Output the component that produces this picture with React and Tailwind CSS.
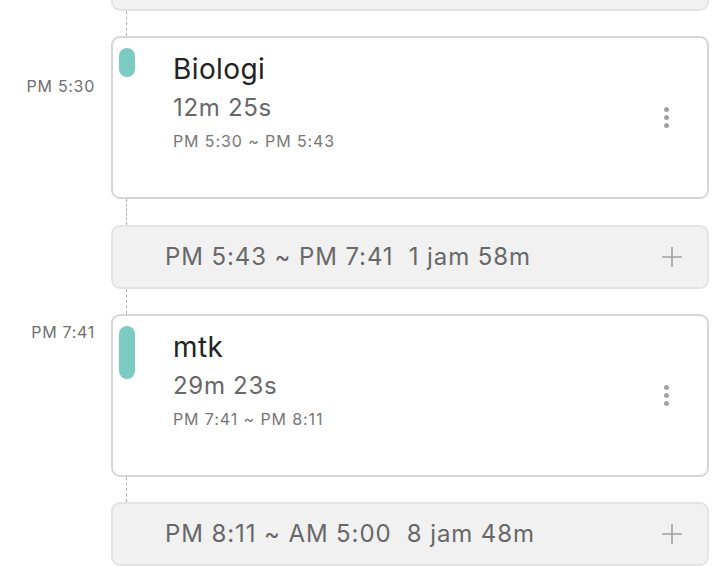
import React from 'react';

const sessions = [
  {
    label: 'PM 5:30',
    labelPad: 'pt-[40px]',
    title: 'Biologi',
    duration: '12m 25s',
    range: 'PM 5:30 ~ PM 5:43',
    pill: 'h-[29px]',
    gap: 'PM 5:43 ~ PM 7:41  1 jam 58m',
  },
  {
    label: 'PM 7:41',
    labelPad: 'pt-[8px]',
    title: 'mtk',
    duration: '29m 23s',
    range: 'PM 7:41 ~ PM 8:11',
    pill: 'h-[53px]',
    gap: 'PM 8:11 ~ AM 5:00  8 jam 48m',
  },
];

const Connector = ({ h }) => (
  <div className={`flex ${h}`}>
    <div className="w-[126px] shrink-0" />
    <div className="h-full border-l border-dashed border-[#b0b0b0]" />
  </div>
);

const Dots = () => (
  <div className="flex flex-col gap-[3px]">
    <span className="w-[5px] h-[5px] rounded-full bg-[#a3a3a3]" />
    <span className="w-[5px] h-[5px] rounded-full bg-[#a3a3a3]" />
    <span className="w-[5px] h-[5px] rounded-full bg-[#a3a3a3]" />
  </div>
);

const Plus = () => (
  <svg width="22" height="22" viewBox="0 0 22 22" fill="none" stroke="#a0a0a0" strokeWidth="1.6">
    <path d="M11 1v20M1 11h20" />
  </svg>
);

const SessionCard = ({ s }) => (
  <div className="flex">
    <div className={`w-[111px] shrink-0 pr-[16px] text-right text-[16px] leading-[20px] text-[#6f6f6f] tracking-[0.7px] ${s.labelPad}`}>
      {s.label}
    </div>
    <div className="flex-1 h-[163px] bg-white border-2 border-[#d6d6d6] rounded-[9px] flex">
      <div className="w-[60px] shrink-0 pl-[6px] pt-[10px]">
        <div className={`w-[16px] rounded-full bg-[#7ccbc3] ${s.pill}`} />
      </div>
      <div className="flex-1 pt-[14px]">
        <div className="text-[28px] leading-[35px] text-[#222] tracking-[0.4px]">{s.title}</div>
        <div className="mt-[6px] text-[24px] leading-[30px] text-[#676767] tracking-[0.7px]">{s.duration}</div>
        <div className="mt-[8px] text-[16px] leading-[20px] text-[#777] tracking-[0.9px]">{s.range}</div>
      </div>
      <div className="flex items-center pr-[38px]">
        <Dots />
      </div>
    </div>
  </div>
);

const GapCard = ({ text }) => (
  <div className="flex">
    <div className="w-[111px] shrink-0" />
    <div className="flex-1 h-[64px] bg-[#f1f1f1] border-2 border-[#e3e3e3] rounded-[9px] flex items-center pl-[52px] pr-[24px]">
      <div className="flex-1 text-[24px] text-[#686868] tracking-[0.9px] whitespace-pre">{text}</div>
      <Plus />
    </div>
  </div>
);

export default function App() {
  return (
    <div className="w-[720px] h-[566px] overflow-hidden bg-white pr-[11px]" style={{ fontFamily: 'Inter, "Liberation Sans", sans-serif' }}>
      <div className="flex">
        <div className="w-[111px] shrink-0" />
        <div className="flex-1 h-[11px] bg-[#f1f1f1] border-2 border-t-0 border-[#e3e3e3] rounded-b-[9px]" />
      </div>
      <Connector h="h-[25px]" />
      <SessionCard s={sessions[0]} />
      <Connector h="h-[26px]" />
      <GapCard text={sessions[0].gap} />
      <Connector h="h-[25px]" />
      <SessionCard s={sessions[1]} />
      <Connector h="h-[25px]" />
      <GapCard text={sessions[1].gap} />
    </div>
  );
}
